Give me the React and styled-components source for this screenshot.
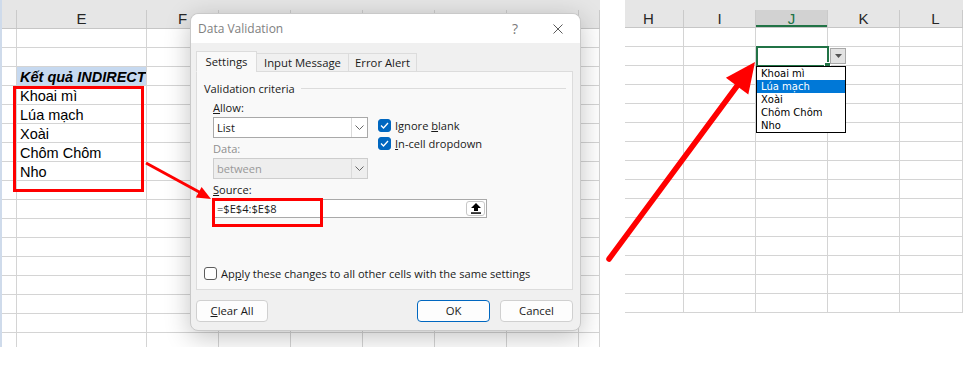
import React from 'react'
import styled, { createGlobalStyle } from 'styled-components'

const GlobalStyle = createGlobalStyle`
  html, body {
    margin: 0;
    padding: 0;
    background: #fff;
  }
  body {
    font-family: 'Liberation Sans', Arial, sans-serif;
  }
`

const Page = styled.div`
  position: relative;
  display: flex;
  align-items: flex-start;
  width: 963px;
  height: 384px;
  overflow: hidden;
  background: #fff;
`

/* ---------- sheet grid ---------- */

const Sheet = styled.div`
  position: relative;
  flex: none;
  width: ${({ $w }) => $w}px;
  height: ${({ $h }) => $h}px;
  margin-left: ${({ $offset }) => $offset || 0}px;
  border-left: ${({ $strip }) => ($strip ? '2px solid #cfdbeb' : 'none')};
  box-sizing: border-box;
  overflow: hidden;
  background: #fff;
`

const HeaderRow = styled.div`
  display: flex;
  height: ${({ $h }) => $h}px;
  padding-top: 10px;
  box-sizing: border-box;
  background: #e6e6e6;
  border-bottom: 1px solid #c6c6c6;
`

const HeaderCell = styled.div`
  flex: none;
  width: ${({ $w }) => $w}px;
  box-sizing: border-box;
  border-right: 1px solid #cacaca;
  padding: ${({ $pad }) => $pad || '0'};
  text-align: center;
  font-size: 15px;
  line-height: 18px;
  color: ${({ $active }) => ($active ? '#217346' : '#262626')};
  background: ${({ $active }) => ($active ? '#d2d2d2' : 'transparent')};
  box-shadow: ${({ $active }) => ($active ? 'inset 0 -2px #217346' : 'none')};
`

const Row = styled.div`
  display: flex;
  height: 19px;
`

const Cell = styled.div`
  flex: none;
  width: ${({ $w }) => $w}px;
  box-sizing: border-box;
  border-right: 1px solid #d4d4d4;
  border-bottom: 1px solid #d4d4d4;
  padding: 1px 0 0 3px;
  font-size: 14.5px;
  line-height: 18px;
  white-space: nowrap;
  overflow: hidden;
  color: #000;
  background: ${({ $fill }) => $fill || 'transparent'};
  font-weight: ${({ $title }) => ($title ? 700 : 400)};
  font-style: ${({ $title }) => ($title ? 'italic' : 'normal')};
`

const RedBox = styled.div`
  position: absolute;
  left: ${({ $x }) => $x}px;
  top: ${({ $y }) => $y}px;
  width: ${({ $w }) => $w}px;
  height: ${({ $h }) => $h}px;
  box-sizing: border-box;
  border: 3px solid #ff0000;
  z-index: 3;
`

/* ---------- dialog ---------- */

const Dialog = styled.div`
  position: absolute;
  left: 188px;
  top: 13px;
  width: 391px;
  height: 318px;
  box-sizing: border-box;
  border: 1px solid #c9c9c9;
  border-radius: 8px;
  background: #f0f0f0;
  box-shadow: 0 6px 26px rgba(0, 0, 0, 0.24);
  font-family: 'Open Sans', 'Noto Sans', sans-serif;
  font-size: 11.1px;
  color: #1a1a1a;
  z-index: 2;
`

const TitleBar = styled.div`
  display: flex;
  align-items: center;
  height: 29px;
  padding: 0 17px 0 7px;
  background: #fff;
  border-radius: 8px 8px 0 0;
`

const TitleText = styled.span`
  font-size: 12px;
  color: #808080;
`

const HelpMark = styled.span`
  margin-left: auto;
  margin-right: 35px;
  font-size: 14px;
  color: #7a7a7a;
`

const DialogBody = styled.div`
  padding: 8px 7px 0 5px;
`

const TabRow = styled.div`
  position: relative;
  z-index: 1;
  display: flex;
  align-items: flex-end;
  height: 21px;
  margin-bottom: -1px;
`

const Tab = styled.div`
  flex: none;
  width: ${({ $w }) => $w}px;
  height: ${({ $active }) => ($active ? 21 : 19)}px;
  box-sizing: border-box;
  margin-left: ${({ $first }) => ($first ? 0 : -1)}px;
  border: 1px solid #dcdcdc;
  border-bottom-color: ${({ $active }) => ($active ? '#f9f9f9' : '#dcdcdc')};
  background: ${({ $active }) => ($active ? '#f9f9f9' : '#f0f0f0')};
  text-align: center;
  line-height: ${({ $active }) => ($active ? 19 : 17)}px;
  font-size: 11.3px;
`

const Panel = styled.div`
  display: flex;
  flex-direction: column;
  height: 219px;
  box-sizing: border-box;
  padding: 9px 6px 9px 7px;
  border: 1px solid #dcdcdc;
  background: #f9f9f9;
`

const Legend = styled.div`
  display: flex;
  align-items: center;
  height: 14px;
`

const LegendLine = styled.span`
  flex: 1;
  height: 1px;
  margin-left: 6px;
  background: #dcdcdc;
`

const Criteria = styled.div`
  padding-left: 9px;
  margin-top: 6px;
`

const FieldRow = styled.div`
  display: flex;
`

const FieldCol = styled.div`
  display: flex;
  flex-direction: column;
  width: 155px;
`

const CheckCol = styled.div`
  display: flex;
  flex-direction: column;
  gap: 5px;
  margin-left: 10px;
  padding-top: 18px;
`

const FieldLabel = styled.div`
  height: 14px;
  line-height: 14px;
  margin: ${({ $top }) => ($top ? '4px' : '0')} 0 2px;
  color: ${({ $muted }) => ($muted ? '#8f8f8f' : '#1a1a1a')};
`

const SelectBox = styled.div`
  display: flex;
  width: 155px;
  height: 21px;
  box-sizing: border-box;
  border: 1px solid ${({ $disabled }) => ($disabled ? '#cdcdcd' : '#a9a9a9')};
  background: ${({ $disabled }) => ($disabled ? '#eeeeee' : '#ffffff')};
  color: ${({ $disabled }) => ($disabled ? '#999999' : '#1a1a1a')};
`

const SelectValue = styled.span`
  flex: 1;
  padding-left: 3px;
  line-height: 19px;
`

const SelectArrow = styled.span`
  display: flex;
  align-items: center;
  justify-content: center;
  width: 15px;
  border-left: 1px solid #dadada;
`

const CheckLine = styled.label`
  display: flex;
  align-items: center;
  gap: 4px;
  height: 13px;
  line-height: 13px;
`

const CheckBox = styled.span`
  display: flex;
  align-items: center;
  justify-content: center;
  flex: none;
  width: 13px;
  height: 13px;
  box-sizing: border-box;
  border-radius: 3px;
  border: 1px solid ${({ $on }) => ($on ? '#0067c0' : '#5c5c5c')};
  background: ${({ $on }) => ($on ? '#0067c0' : '#ffffff')};
`

const SourceInput = styled.div`
  display: flex;
  align-items: center;
  width: 274px;
  height: 19px;
  box-sizing: border-box;
  padding-left: 3px;
  border: 1px solid #a9a9a9;
  background: #fff;
`

const UploadBtn = styled.span`
  display: flex;
  align-items: center;
  justify-content: center;
  margin-left: auto;
  margin-right: 1px;
  width: 19px;
  height: 15px;
  box-sizing: border-box;
  border: 1px solid #c8c8c8;
  border-radius: 3px;
  background: #fff;
`

const ApplyRow = styled(CheckLine)`
  margin-top: auto;
`

const Footer = styled.div`
  display: flex;
  align-items: center;
  gap: 10px;
  margin-top: 10px;
  padding: 0 7px 0 5px;
`

const Button = styled.div`
  width: ${({ $w }) => $w}px;
  height: 22px;
  box-sizing: border-box;
  margin-left: ${({ $push }) => ($push ? 'auto' : '0')};
  border: 1px solid ${({ $primary }) => ($primary ? '#0067c0' : '#d0d0d0')};
  border-radius: 4px;
  background: #fdfdfd;
  text-align: center;
  line-height: 20px;
  font-size: 11.3px;
`

const U = styled.span`
  text-decoration: underline;
  text-underline-offset: 1px;
`

/* ---------- right sheet dropdown ---------- */

const ActiveCell = styled.div`
  position: absolute;
  left: 131px;
  top: 46px;
  width: 73px;
  height: 21px;
  box-sizing: border-box;
  border: 2px solid #217346;

  &::after {
    content: '';
    position: absolute;
    right: -4px;
    bottom: -4px;
    width: 5px;
    height: 5px;
    background: #217346;
    border: 1px solid #fff;
  }
`

const DropButton = styled.div`
  position: absolute;
  left: 205px;
  top: 48px;
  display: flex;
  align-items: center;
  justify-content: center;
  width: 16px;
  height: 16px;
  box-sizing: border-box;
  border: 1px solid #a8a8a8;
  background: #e3e3e3;
`

const DropList = styled.div`
  position: absolute;
  left: 131px;
  top: 66px;
  width: 90px;
  box-sizing: border-box;
  border: 1px solid #000;
  background: #fff;
  z-index: 2;
`

const DropItem = styled.div`
  height: 13px;
  padding-left: 4px;
  font-family: 'DejaVu Sans', Verdana, sans-serif;
  font-size: 10px;
  line-height: 13px;
  color: ${({ $hot }) => ($hot ? '#fff' : '#000')};
  background: ${({ $hot }) => ($hot ? '#0078d7' : 'transparent')};
`

const Overlay = styled.svg`
  position: absolute;
  left: 0;
  top: 0;
  width: 963px;
  height: 384px;
  pointer-events: none;
  z-index: 10;
`

const leftCols = [15, 130, 72, 72, 72, 72, 72, 72, 21]
const rightCols = [59, 72, 72, 72, 63]
const leftHeads = ['', 'E', 'F', '', '', '', '', '', '']
const rightHeads = ['H', 'I', 'J', 'K', 'L']
const fruits = ['Khoai mì', 'Lúa mạch', 'Xoài', 'Chôm Chôm', 'Nho']

const Chevron = () => (
  <svg width="9" height="5" viewBox="0 0 9 5">
    <polyline points="0.5,0.5 4.5,4.5 8.5,0.5" fill="none" stroke="#666" strokeWidth="1" />
  </svg>
)

const Tick = () => (
  <svg width="9" height="7" viewBox="0 0 9 7">
    <polyline points="1,3.5 3.5,6 8,1" fill="none" stroke="#fff" strokeWidth="1.3" />
  </svg>
)

function Select({ value, disabled }) {
  return (
    <SelectBox $disabled={disabled}>
      <SelectValue>{value}</SelectValue>
      <SelectArrow>
        <Chevron />
      </SelectArrow>
    </SelectBox>
  )
}

function LeftSheet() {
  const rows = Array.from({ length: 17 }, (_, i) => i)
  return (
    <Sheet $w={600} $h={347} $strip>
      <HeaderRow $h={29}>
        {leftCols.map((w, i) => (
          <HeaderCell key={i} $w={w}>
            {leftHeads[i]}
          </HeaderCell>
        ))}
      </HeaderRow>
      {rows.map((r) => (
        <Row key={r}>
          {leftCols.map((w, c) => {
            if (c === 1 && r === 2)
              return (
                <Cell key={c} $w={w} $fill="#c6d9f0" $title>
                  Kết quả INDIRECT
                </Cell>
              )
            return (
              <Cell key={c} $w={w}>
                {c === 1 && r >= 3 && r <= 7 ? fruits[r - 3] : ''}
              </Cell>
            )
          })}
        </Row>
      ))}

      <Dialog>
        <TitleBar>
          <TitleText>Data Validation</TitleText>
          <HelpMark>?</HelpMark>
          <svg width="10" height="10" viewBox="0 0 10 10">
            <path d="M0.5 0.5 L9.5 9.5 M9.5 0.5 L0.5 9.5" stroke="#5a5a5a" strokeWidth="1" />
          </svg>
        </TitleBar>
        <DialogBody>
          <TabRow>
            <Tab $w={61} $active $first>
              Settings
            </Tab>
            <Tab $w={93}>Input Message</Tab>
            <Tab $w={69}>Error Alert</Tab>
          </TabRow>
          <Panel>
            <Legend>
              <span>Validation criteria</span>
              <LegendLine />
            </Legend>
            <Criteria>
              <FieldRow>
                <FieldCol>
                  <FieldLabel>
                    <U>A</U>llow:
                  </FieldLabel>
                  <Select value="List" />
                  <FieldLabel $top $muted>
                    Data:
                  </FieldLabel>
                  <Select value="between" disabled />
                </FieldCol>
                <CheckCol>
                  <CheckLine>
                    <CheckBox $on>
                      <Tick />
                    </CheckBox>
                    <span>
                      Ignore <U>b</U>lank
                    </span>
                  </CheckLine>
                  <CheckLine>
                    <CheckBox $on>
                      <Tick />
                    </CheckBox>
                    <span>
                      <U>I</U>n-cell dropdown
                    </span>
                  </CheckLine>
                </CheckCol>
              </FieldRow>
              <FieldLabel $top>
                <U>S</U>ource:
              </FieldLabel>
              <SourceInput>
                <span>=$E$4:$E$8</span>
                <UploadBtn>
                  <svg width="10" height="11" viewBox="0 0 10 11">
                    <polygon points="5,0 10,5 7,5 7,8 3,8 3,5 0,5" fill="#000" />
                    <rect x="0" y="9.3" width="10" height="1.5" fill="#000" />
                  </svg>
                </UploadBtn>
              </SourceInput>
            </Criteria>
            <ApplyRow>
              <CheckBox />
              <span>
                Ap<U>p</U>ly these changes to all other cells with the same settings
              </span>
            </ApplyRow>
          </Panel>
        </DialogBody>
        <Footer>
          <Button $w={72}>
            <U>C</U>lear All
          </Button>
          <Button $w={73} $primary $push>
            OK
          </Button>
          <Button $w={73}>Cancel</Button>
        </Footer>
      </Dialog>

      <RedBox $x={11} $y={86} $w={131} $h={106} />
      <RedBox $x={210} $y={198} $w={111} $h={29} />
    </Sheet>
  )
}

function RightSheet() {
  const rows = Array.from({ length: 15 }, (_, i) => i)
  return (
    <Sheet $w={338} $h={313} $offset={25}>
      <HeaderRow $h={28}>
        {rightCols.map((w, i) => (
          <HeaderCell
            key={i}
            $w={w}
            $active={i === 2}
            $pad={i === 0 ? '0 11px 0 0' : i === 4 ? '0 0 0 9px' : '0'}
          >
            {rightHeads[i]}
          </HeaderCell>
        ))}
      </HeaderRow>
      {rows.map((r) => (
        <Row key={r}>
          {rightCols.map((w, c) => (
            <Cell key={c} $w={w} />
          ))}
        </Row>
      ))}
      <ActiveCell />
      <DropButton>
        <svg width="7" height="4" viewBox="0 0 7 4">
          <polygon points="0,0 7,0 3.5,4" fill="#555" />
        </svg>
      </DropButton>
      <DropList>
        {fruits.map((f, i) => (
          <DropItem key={f} $hot={i === 1}>
            {f}
          </DropItem>
        ))}
      </DropList>
    </Sheet>
  )
}

export default function App() {
  return (
    <>
      <GlobalStyle />
      <Page>
        <LeftSheet />
        <RightSheet />
        <Overlay viewBox="0 0 963 384">
          <line x1="146" y1="163" x2="201" y2="193" stroke="#ff0000" strokeWidth="3" />
          <polygon points="211,199 195.8,197.4 201.6,186.9" fill="#ff0000" />
          <line
            x1="609"
            y1="259"
            x2="740"
            y2="82"
            stroke="#ff0000"
            strokeWidth="5.5"
            strokeLinecap="round"
          />
          <polygon points="755,62 748.3,94.4 725.9,77.8" fill="#ff0000" />
        </Overlay>
      </Page>
    </>
  )
}
